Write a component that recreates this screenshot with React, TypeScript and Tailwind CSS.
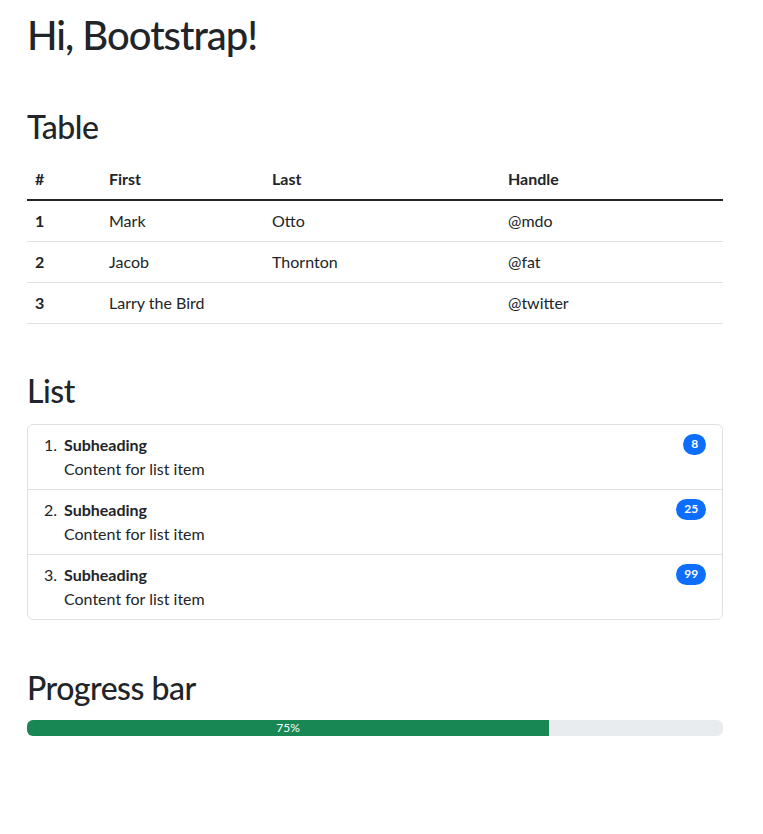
const rows = [
  { id: 1, first: 'Mark', last: 'Otto', handle: '@mdo' },
  { id: 2, first: 'Jacob', last: 'Thornton', handle: '@fat' },
  { id: 3, first: 'Larry the Bird', last: '', handle: '@twitter' },
];

const items = [
  { n: 1, count: 8 },
  { n: 2, count: 25 },
  { n: 3, count: 99 },
];

export default function App() {
  return (
    <div
      className="min-h-screen bg-white pl-[27px] pr-[40px] pt-[11px] text-[16px] leading-[1.5] text-[#212529]"
      style={{ fontFamily: 'Lato, "Noto Sans", sans-serif' }}
    >
      <h1 className="text-[40px] font-medium leading-[1.2] tracking-[-1px]">Hi, Bootstrap!</h1>

      <h2 className="mt-[49px] mb-[14px] text-[32px] font-medium leading-[1.2] tracking-[-0.5px]">Table</h2>
      <table className="w-full border-collapse">
        <thead>
          <tr className="border-b-2 border-[#212529]">
            <th className="h-[40px] w-[74px] px-2 pb-[2px] text-left font-bold">#</th>
            <th className="w-[163px] px-2 pb-[2px] text-left font-bold">First</th>
            <th className="w-[236px] px-2 pb-[2px] text-left font-bold">Last</th>
            <th className="px-2 pb-[2px] text-left font-bold">Handle</th>
          </tr>
        </thead>
        <tbody>
          {rows.map((r) => (
            <tr key={r.id} className="border-b border-[#dee2e6]">
              <th className="h-[41px] px-2 text-left font-bold">{r.id}</th>
              <td className="px-2">{r.first}</td>
              <td className="px-2">{r.last}</td>
              <td className="px-2">{r.handle}</td>
            </tr>
          ))}
        </tbody>
      </table>

      <h2 className="mt-[48px] mb-[14px] text-[32px] font-medium leading-[1.2] tracking-[-0.5px]">List</h2>
      <ol className="rounded-[6px] border border-[#dee2e6]">
        {items.map((it, i) => (
          <li
            key={it.n}
            className={`flex items-start justify-between px-4 py-2 ${i > 0 ? 'border-t border-[#dee2e6]' : ''}`}
          >
            <div className="flex">
              <span className="w-[12px]">{it.n}.</span>
              <div className="ml-2">
                <div className="font-bold">Subheading</div>
                <div>Content for list item</div>
              </div>
            </div>
            <span className="mt-px rounded-full bg-[#0d6efd] px-[7.8px] py-[4.2px] text-[12px] font-bold leading-none text-white">
              {it.count}
            </span>
          </li>
        ))}
      </ol>

      <h2 className="mt-[49px] mb-[12px] text-[32px] font-medium leading-[1.2] tracking-[-0.5px]">Progress bar</h2>
      <div className="flex h-4 overflow-hidden rounded-[6px] bg-[#e9ecef]">
        <div className="flex w-3/4 items-center justify-center bg-[#198754] text-[12px] text-white">75%</div>
      </div>
    </div>
  );
}
